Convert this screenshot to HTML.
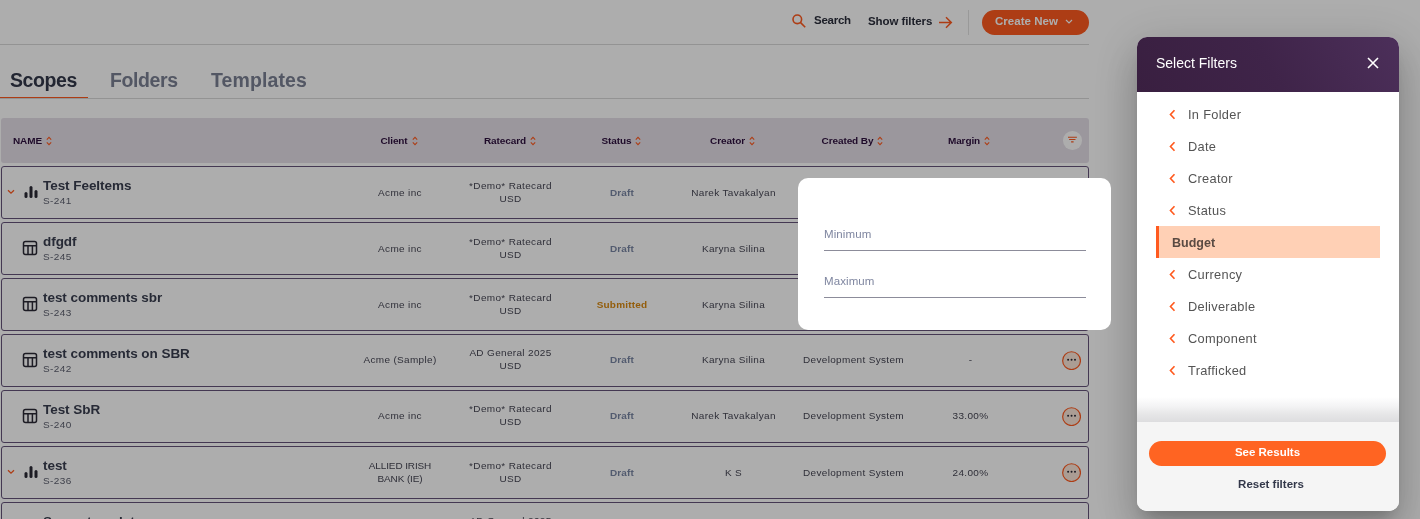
<!DOCTYPE html>
<html lang="en"><head><meta charset="utf-8"><title>Scopes</title>
<style>
*{box-sizing:border-box;margin:0;padding:0}
html,body{width:1420px;height:519px;overflow:hidden;background:#fff;font-family:"Liberation Sans",sans-serif;color:#2b2a36}
#page{will-change:transform;position:absolute;left:0;top:0;width:1420px;height:519px;overflow:hidden;background:#fff}
#ov{position:absolute;left:0;top:0;width:1420px;height:519px;background:rgba(0,0,0,.32)}
.topline{position:absolute;left:0;top:44px;width:1089px;height:1px;background:#d9d9d9}
.tabline{position:absolute;left:0;top:98px;width:1089px;height:1px;background:#d9d9d9}
.tabact{position:absolute;left:0;top:97px;width:88px;height:1px;background:#ff5a1f}
.tab{position:absolute;top:67px;font-size:19.5px;font-weight:bold;line-height:26px;color:#7b8194;white-space:nowrap;letter-spacing:-.4px}
.tab.a{color:#33384a}
.tb{position:absolute;top:12.5px;font-size:11.5px;font-weight:bold;line-height:16px;color:#2c2f3c;white-space:nowrap;letter-spacing:-.08px}
.vdiv{position:absolute;left:968px;top:10px;width:1px;height:25px;background:#e2e2e2}
.cbtn{position:absolute;left:982px;top:10px;width:107px;height:25px;border-radius:13px;background:#ff5a1f;color:#fff;font-size:11.5px;font-weight:bold;line-height:23.5px;padding-left:13px;white-space:nowrap;letter-spacing:.03px}
.thead{position:absolute;left:1px;top:118px;width:1088px;height:44.6px;background:#e5dfe8;border-radius:3px}
.h{position:absolute;top:132.5px;height:16px;font-size:10px;font-weight:bold;color:#2d0f3d;line-height:16px;white-space:nowrap;display:flex;align-items:center;justify-content:center;width:130px;letter-spacing:-.1px}
.h .sort{margin-left:4px}
.h span{display:inline-block;transform:scaleY(.9);transform-origin:50% 62%}
.row{position:absolute;left:1px;width:1088px;height:53px;border:1px solid #65537a;border-radius:3px;background:#fff}
.row .chev{position:absolute;left:5px;top:22px}
.row .ic{position:absolute;left:20.5px;top:17.3px}.row .ic.t{left:20px}
.nm{position:absolute;left:41px;top:10px;white-space:nowrap}
.nm b{display:block;font-size:13.5px;line-height:18px;color:#3a3f50;letter-spacing:-.05px}
.nm span{display:block;font-size:10px;line-height:12px;color:#5e6170;margin-top:-.2px;letter-spacing:.4px;transform:scaleY(.9);transform-origin:0 78%}
.c .s{display:inline-block;transform:scaleY(.94);transform-origin:50% 54%}
.c{position:absolute;top:-.2px;height:51px;display:flex;align-items:center;justify-content:center;text-align:center;font-size:10px;line-height:13.9px;color:#474755;width:130px;white-space:nowrap;letter-spacing:.33px}
.row.lo .c{top:.55px}
.c1{left:333px}.c2{left:443.5px}.c3{left:555px}.c4{left:666.5px}.c5{left:786.5px}.c6{left:903.5px}
.h1{left:334px}.h2{left:445px}.h3{left:556.5px}.h4{left:667.5px}.h5{left:787.5px}.h6{left:904px}
.st{font-weight:bold;color:#7a86a4;letter-spacing:.18px}
.st.sub{color:#d98a12}
.row .dots{position:absolute;left:1059px;top:15px}
.fcirc{position:absolute;left:1063px;top:131px;width:18.6px;height:18.6px;border-radius:50%;background:#fff}
#pop{will-change:transform;position:absolute;z-index:5;left:798px;top:178px;width:313px;height:151.5px;background:#fff;border-radius:10px}
.fld{position:absolute;left:26px;width:262px;border-bottom:1px solid #8c8c9a;height:28px;font-size:11.5px;line-height:14px;color:#7f86a0;padding-top:4px;letter-spacing:.1px}
#panel{will-change:transform;position:absolute;left:1137px;top:37px;width:262px;height:474px;background:#fff;border-radius:10px;overflow:hidden}
#panelsh{position:absolute;left:1137px;top:37px;width:262px;height:474px;border-radius:10px;box-shadow:0 11px 15px -7px rgba(0,0,0,.2),0 24px 38px 3px rgba(0,0,0,.14),0 9px 46px 8px rgba(0,0,0,.12)}
.ph{position:absolute;left:0;top:0;width:262px;height:55px;background:linear-gradient(60deg,#391f40 0%,#3f2449 50%,#4c2f5a 100%);color:#fff;font-size:14px;line-height:53.5px;padding-left:19px}
.px{position:absolute;left:230px;top:20px}
.it{position:absolute;left:32px;height:20px;line-height:20px;font-size:12.8px;color:#545454;white-space:nowrap;letter-spacing:.3px;margin-top:1px}
.it .bk{position:absolute;left:-.5px;top:4px}
.it span{position:absolute;left:19px;top:0}
.sel{position:absolute;left:19px;top:189px;width:224px;height:32px;background:#ffd0b5;border-left:3px solid #ff5a1f;font-size:12.5px;font-weight:bold;line-height:34px;padding-left:13px;color:#5a4a42}
.pf{position:absolute;left:0;top:385px;width:262px;height:89px;background:#f5f5f5}
.pfg{position:absolute;left:0;top:360px;width:262px;height:25px;background:linear-gradient(#fff 0%,#f4f4f5 35%,#e6e6e7 70%,#dddddf 100%)}
.sr{position:absolute;left:12px;top:404px;width:237px;height:25px;border-radius:13px;background:#ff6422;color:#fff;font-weight:bold;font-size:11.5px;line-height:22.5px;text-align:center}
.rf{position:absolute;left:0;top:439px;width:262px;text-align:center;font-weight:bold;font-size:11.5px;line-height:16px;color:#33384a;padding-left:6px}
</style></head><body>
<div id="page">
<svg style="position:absolute;left:791px;top:13px" width="16" height="16" viewBox="0 0 16 16" fill="none" stroke="#ff5a1f" stroke-width="1.6"><circle cx="6.3" cy="6.3" r="4.3"/><path d="M9.6 9.6l4.6 4.6"/></svg>
<div class="tb" style="left:814px;top:11.7px;letter-spacing:-.25px">Search</div>
<div class="tb" style="left:868px">Show filters</div>
<svg style="position:absolute;left:938px;top:16px" width="15" height="13" viewBox="0 0 15 13" fill="none" stroke="#ff5a1f" stroke-width="1.5"><path d="M1 6.5h12M8 1.2l5.3 5.3L8 11.8"/></svg>
<div class="vdiv"></div>
<div class="cbtn">Create New<svg style="position:absolute;left:82.5px;top:8.5px" width="8" height="6" viewBox="0 0 8 6" fill="none" stroke="#fff" stroke-width="1.2"><path d="M1 1l3 3 3-3"/></svg></div>
<div class="topline"></div>
<div class="tab a" style="left:10px">Scopes</div>
<div class="tab" style="left:110px">Folders</div>
<div class="tab" style="left:211px;letter-spacing:.1px">Templates</div>
<div class="tabline"></div><div class="tabact"></div>
<div class="thead"></div>
<div class="h" style="left:13px;width:auto"><span>NAME</span><svg class="sort" width="6" height="10" viewBox="0 0 6 10" fill="none" stroke="#ff5a1f" stroke-width="1.1"><path d="M0.8 3.6L3 1.4l2.2 2.2M0.8 6.4L3 8.6l2.2-2.2"/></svg></div>
<div class="h h1"><span>Client</span><svg class="sort" width="6" height="10" viewBox="0 0 6 10" fill="none" stroke="#ff5a1f" stroke-width="1.1"><path d="M0.8 3.6L3 1.4l2.2 2.2M0.8 6.4L3 8.6l2.2-2.2"/></svg></div><div class="h h2"><span>Ratecard</span><svg class="sort" width="6" height="10" viewBox="0 0 6 10" fill="none" stroke="#ff5a1f" stroke-width="1.1"><path d="M0.8 3.6L3 1.4l2.2 2.2M0.8 6.4L3 8.6l2.2-2.2"/></svg></div><div class="h h3"><span>Status</span><svg class="sort" width="6" height="10" viewBox="0 0 6 10" fill="none" stroke="#ff5a1f" stroke-width="1.1"><path d="M0.8 3.6L3 1.4l2.2 2.2M0.8 6.4L3 8.6l2.2-2.2"/></svg></div><div class="h h4"><span>Creator</span><svg class="sort" width="6" height="10" viewBox="0 0 6 10" fill="none" stroke="#ff5a1f" stroke-width="1.1"><path d="M0.8 3.6L3 1.4l2.2 2.2M0.8 6.4L3 8.6l2.2-2.2"/></svg></div><div class="h h5"><span>Created By</span><svg class="sort" width="6" height="10" viewBox="0 0 6 10" fill="none" stroke="#ff5a1f" stroke-width="1.1"><path d="M0.8 3.6L3 1.4l2.2 2.2M0.8 6.4L3 8.6l2.2-2.2"/></svg></div><div class="h h6"><span>Margin</span><svg class="sort" width="6" height="10" viewBox="0 0 6 10" fill="none" stroke="#ff5a1f" stroke-width="1.1"><path d="M0.8 3.6L3 1.4l2.2 2.2M0.8 6.4L3 8.6l2.2-2.2"/></svg></div>
<div class="fcirc"><svg style="position:absolute;left:0;top:0" width="19" height="19" viewBox="0 0 19 19" fill="none" stroke="#ff5a1f" stroke-width="1.15"><path d="M5 6.2h8.9M6.1 8.5h6.4M8.1 10.8h2.5"/></svg></div>
<div class="row lo" style="top:166px"><svg class="chev" width="8" height="6" viewBox="0 0 8 6" fill="none" stroke="#ff5a1f" stroke-width="1.3"><path d="M1 1.2l3 3 3-3"/></svg><svg class="ic" width="16" height="16" viewBox="0 0 16 16"><rect x="1.5" y="8" width="3" height="6" rx="1.5" fill="#2b2a36"/><rect x="6.5" y="2" width="3" height="12" rx="1.5" fill="#2b2a36"/><rect x="11.5" y="6" width="3" height="8" rx="1.5" fill="#2b2a36"/></svg><div class="nm"><b>Test FeeItems</b><span>S-241</span></div><div class="c c1"><span class="s">Acme inc</span></div><div class="c c2"><span class="s">*Demo* Ratecard<br>USD</span></div><div class="c c3 st"><span class="s">Draft</span></div><div class="c c4"><span class="s">Narek Tavakalyan</span></div><div class="c c5"><span class="s">Development System</span></div><div class="c c6"><span class="s"></span></div><svg class="dots" width="20" height="20" viewBox="-0.55 -0.15 20 20"><circle cx="10" cy="10.5" r="8.9" fill="#fce8db" stroke="#ff5a1f" stroke-width="1.2"/><circle cx="6.55" cy="9.7" r="1" fill="#2b2a36"/><circle cx="10" cy="9.7" r="1" fill="#2b2a36"/><circle cx="13.45" cy="9.7" r="1" fill="#2b2a36"/></svg></div>
<div class="row lo" style="top:222px"><svg class="ic t" width="16" height="16" viewBox="0 0 16 16" fill="none" stroke="#2b2a36" stroke-width="1.5"><rect x="1.5" y="1.5" width="13" height="13" rx="2"/><path d="M1.5 5.8h13M6 5.8v8.7M10.4 5.8v8.7"/></svg><div class="nm"><b>dfgdf</b><span>S-245</span></div><div class="c c1"><span class="s">Acme inc</span></div><div class="c c2"><span class="s">*Demo* Ratecard<br>USD</span></div><div class="c c3 st"><span class="s">Draft</span></div><div class="c c4"><span class="s">Karyna Silina</span></div><div class="c c5"><span class="s">Development System</span></div><div class="c c6"><span class="s">-</span></div><svg class="dots" width="20" height="20" viewBox="-0.55 -0.15 20 20"><circle cx="10" cy="10.5" r="8.9" fill="#fce8db" stroke="#ff5a1f" stroke-width="1.2"/><circle cx="6.55" cy="9.7" r="1" fill="#2b2a36"/><circle cx="10" cy="9.7" r="1" fill="#2b2a36"/><circle cx="13.45" cy="9.7" r="1" fill="#2b2a36"/></svg></div>
<div class="row lo" style="top:278px"><svg class="ic t" width="16" height="16" viewBox="0 0 16 16" fill="none" stroke="#2b2a36" stroke-width="1.5"><rect x="1.5" y="1.5" width="13" height="13" rx="2"/><path d="M1.5 5.8h13M6 5.8v8.7M10.4 5.8v8.7"/></svg><div class="nm"><b>test comments sbr</b><span>S-243</span></div><div class="c c1"><span class="s">Acme inc</span></div><div class="c c2"><span class="s">*Demo* Ratecard<br>USD</span></div><div class="c c3 st sub"><span class="s">Submitted</span></div><div class="c c4"><span class="s">Karyna Silina</span></div><div class="c c5"><span class="s">Development System</span></div><div class="c c6"><span class="s">-</span></div><svg class="dots" width="20" height="20" viewBox="-0.55 -0.15 20 20"><circle cx="10" cy="10.5" r="8.9" fill="#fce8db" stroke="#ff5a1f" stroke-width="1.2"/><circle cx="6.55" cy="9.7" r="1" fill="#2b2a36"/><circle cx="10" cy="9.7" r="1" fill="#2b2a36"/><circle cx="13.45" cy="9.7" r="1" fill="#2b2a36"/></svg></div>
<div class="row" style="top:334px"><svg class="ic t" width="16" height="16" viewBox="0 0 16 16" fill="none" stroke="#2b2a36" stroke-width="1.5"><rect x="1.5" y="1.5" width="13" height="13" rx="2"/><path d="M1.5 5.8h13M6 5.8v8.7M10.4 5.8v8.7"/></svg><div class="nm"><b>test comments on SBR</b><span>S-242</span></div><div class="c c1"><span class="s">Acme (Sample)</span></div><div class="c c2"><span class="s">AD General 2025<br>USD</span></div><div class="c c3 st"><span class="s">Draft</span></div><div class="c c4"><span class="s">Karyna Silina</span></div><div class="c c5"><span class="s">Development System</span></div><div class="c c6"><span class="s">-</span></div><svg class="dots" width="20" height="20" viewBox="-0.55 -0.15 20 20"><circle cx="10" cy="10.5" r="8.9" fill="#fce8db" stroke="#ff5a1f" stroke-width="1.2"/><circle cx="6.55" cy="9.7" r="1" fill="#2b2a36"/><circle cx="10" cy="9.7" r="1" fill="#2b2a36"/><circle cx="13.45" cy="9.7" r="1" fill="#2b2a36"/></svg></div>
<div class="row" style="top:390px"><svg class="ic t" width="16" height="16" viewBox="0 0 16 16" fill="none" stroke="#2b2a36" stroke-width="1.5"><rect x="1.5" y="1.5" width="13" height="13" rx="2"/><path d="M1.5 5.8h13M6 5.8v8.7M10.4 5.8v8.7"/></svg><div class="nm"><b>Test SbR</b><span>S-240</span></div><div class="c c1"><span class="s">Acme inc</span></div><div class="c c2"><span class="s">*Demo* Ratecard<br>USD</span></div><div class="c c3 st"><span class="s">Draft</span></div><div class="c c4"><span class="s">Narek Tavakalyan</span></div><div class="c c5"><span class="s">Development System</span></div><div class="c c6"><span class="s">33.00%</span></div><svg class="dots" width="20" height="20" viewBox="-0.55 -0.15 20 20"><circle cx="10" cy="10.5" r="8.9" fill="#fce8db" stroke="#ff5a1f" stroke-width="1.2"/><circle cx="6.55" cy="9.7" r="1" fill="#2b2a36"/><circle cx="10" cy="9.7" r="1" fill="#2b2a36"/><circle cx="13.45" cy="9.7" r="1" fill="#2b2a36"/></svg></div>
<div class="row lo" style="top:446px"><svg class="chev" width="8" height="6" viewBox="0 0 8 6" fill="none" stroke="#ff5a1f" stroke-width="1.3"><path d="M1 1.2l3 3 3-3"/></svg><svg class="ic" width="16" height="16" viewBox="0 0 16 16"><rect x="1.5" y="8" width="3" height="6" rx="1.5" fill="#2b2a36"/><rect x="6.5" y="2" width="3" height="12" rx="1.5" fill="#2b2a36"/><rect x="11.5" y="6" width="3" height="8" rx="1.5" fill="#2b2a36"/></svg><div class="nm"><b>test</b><span>S-236</span></div><div class="c c1" style="letter-spacing:-.12px"><span class="s">ALLIED IRISH<br>BANK (IE)</span></div><div class="c c2"><span class="s">*Demo* Ratecard<br>USD</span></div><div class="c c3 st"><span class="s">Draft</span></div><div class="c c4"><span class="s">K S</span></div><div class="c c5"><span class="s">Development System</span></div><div class="c c6"><span class="s">24.00%</span></div><svg class="dots" width="20" height="20" viewBox="-0.55 -0.15 20 20"><circle cx="10" cy="10.5" r="8.9" fill="#fce8db" stroke="#ff5a1f" stroke-width="1.2"/><circle cx="6.55" cy="9.7" r="1" fill="#2b2a36"/><circle cx="10" cy="9.7" r="1" fill="#2b2a36"/><circle cx="13.45" cy="9.7" r="1" fill="#2b2a36"/></svg></div>
<div class="row" style="top:502px"><svg class="chev" width="8" height="6" viewBox="0 0 8 6" fill="none" stroke="#ff5a1f" stroke-width="1.3"><path d="M1 1.2l3 3 3-3"/></svg><svg class="ic" width="16" height="16" viewBox="0 0 16 16"><rect x="1.5" y="8" width="3" height="6" rx="1.5" fill="#2b2a36"/><rect x="6.5" y="2" width="3" height="12" rx="1.5" fill="#2b2a36"/><rect x="11.5" y="6" width="3" height="8" rx="1.5" fill="#2b2a36"/></svg><div class="nm"><b>Scope template</b><span>S-230</span></div><div class="c c1"><span class="s">Acme inc</span></div><div class="c c2"><span class="s">AD General 2025<br>USD</span></div><div class="c c3 st"><span class="s">Draft</span></div><div class="c c4"><span class="s">K S</span></div><div class="c c5"><span class="s">Development System</span></div><div class="c c6"><span class="s">-</span></div></div>
</div>
<div id="ov"></div>
<div id="pop"><div class="fld" style="top:45px">Minimum</div><div class="fld" style="top:92px">Maximum</div></div>
<div id="panelsh"></div>
<div id="panel">
<div class="ph">Select Filters</div>
<svg class="px" width="12" height="12" viewBox="0 0 12 12" fill="none" stroke="#fff" stroke-width="1.6"><path d="M1 1l10 10M11 1L1 11"/></svg>
<div class="it" style="top:67px"><svg class="bk" width="7" height="11" viewBox="0 0 7 11" fill="none" stroke="#ff5a1f" stroke-width="1.65"><path d="M5.5 1.3L1.5 5.5l4 4.2"/></svg><span>In Folder</span></div>
<div class="it" style="top:99px"><svg class="bk" width="7" height="11" viewBox="0 0 7 11" fill="none" stroke="#ff5a1f" stroke-width="1.65"><path d="M5.5 1.3L1.5 5.5l4 4.2"/></svg><span>Date</span></div>
<div class="it" style="top:131px"><svg class="bk" width="7" height="11" viewBox="0 0 7 11" fill="none" stroke="#ff5a1f" stroke-width="1.65"><path d="M5.5 1.3L1.5 5.5l4 4.2"/></svg><span>Creator</span></div>
<div class="it" style="top:163px"><svg class="bk" width="7" height="11" viewBox="0 0 7 11" fill="none" stroke="#ff5a1f" stroke-width="1.65"><path d="M5.5 1.3L1.5 5.5l4 4.2"/></svg><span>Status</span></div>
<div class="it" style="top:227px"><svg class="bk" width="7" height="11" viewBox="0 0 7 11" fill="none" stroke="#ff5a1f" stroke-width="1.65"><path d="M5.5 1.3L1.5 5.5l4 4.2"/></svg><span>Currency</span></div>
<div class="it" style="top:259px"><svg class="bk" width="7" height="11" viewBox="0 0 7 11" fill="none" stroke="#ff5a1f" stroke-width="1.65"><path d="M5.5 1.3L1.5 5.5l4 4.2"/></svg><span>Deliverable</span></div>
<div class="it" style="top:291px"><svg class="bk" width="7" height="11" viewBox="0 0 7 11" fill="none" stroke="#ff5a1f" stroke-width="1.65"><path d="M5.5 1.3L1.5 5.5l4 4.2"/></svg><span>Component</span></div>
<div class="it" style="top:323px"><svg class="bk" width="7" height="11" viewBox="0 0 7 11" fill="none" stroke="#ff5a1f" stroke-width="1.65"><path d="M5.5 1.3L1.5 5.5l4 4.2"/></svg><span>Trafficked</span></div>
<div class="sel">Budget</div>
<div class="pfg"></div><div class="pf"></div>
<div class="sr">See Results</div>
<div class="rf">Reset filters</div>
</div>
</body></html>
